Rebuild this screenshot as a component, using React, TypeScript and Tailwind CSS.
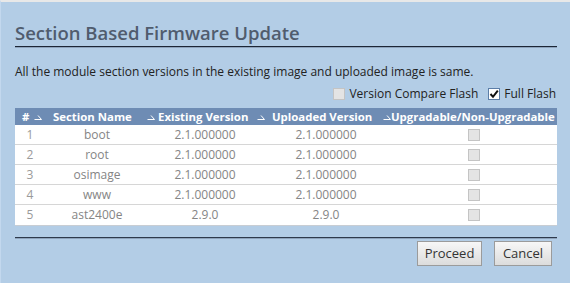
import React from 'react'

const rows = [
  { id: 1, name: 'boot', existing: '2.1.000000', uploaded: '2.1.000000' },
  { id: 2, name: 'root', existing: '2.1.000000', uploaded: '2.1.000000' },
  { id: 3, name: 'osimage', existing: '2.1.000000', uploaded: '2.1.000000' },
  { id: 4, name: 'www', existing: '2.1.000000', uploaded: '2.1.000000' },
  { id: 5, name: 'ast2400e', existing: '2.9.0', uploaded: '2.9.0' },
]

function SortIcon() {
  return (
    <svg width="8" height="6" viewBox="0 0 8 6" className="shrink-0">
      <path d="M0.5 5.5 H7.5 L4 1.5" fill="none" stroke="#ffffff" strokeWidth="1" />
    </svg>
  )
}

function Box({ checked, disabled }: { checked?: boolean; disabled?: boolean }) {
  return (
    <span
      className={`inline-flex items-center justify-center w-[12px] h-[12px] border ${
        disabled ? 'border-[#c4c4c4] bg-[#e4e4e4]' : 'border-[#5c7ea8] bg-white'
      }`}
    >
      {checked && (
        <svg width="10" height="10" viewBox="0 0 10 10">
          <path d="M1.5 5 L4 7.8 L8.8 1.6" fill="none" stroke="#111" strokeWidth="2" />
        </svg>
      )}
    </span>
  )
}

export default function App() {
  return (
    <div
      className="w-[570px] h-[283px] bg-[#b3cde6] border-t-2 border-t-[#e8e8e8] border-l border-l-[#c3d8ee] pl-[14px] pr-[13px] overflow-hidden"
      style={{ fontFamily: '"Open Sans", sans-serif' }}
    >
      <div className="pt-[19px] pb-px border-b border-b-[#1c2636] shadow-[0_1px_0_#8ea3bc]">
        <h1 className="text-[18.5px] leading-[24px] font-semibold text-[#505c6e]">
          Section Based Firmware Update
        </h1>
      </div>

      <p className="mt-[17px] text-[12px] leading-[16px] text-[#222]">
        All the module section versions in the existing image and uploaded image is same.
      </p>

      <div className="mt-[6px] flex items-center justify-end gap-[4px] text-[12px] leading-[16px] text-[#222] pr-px">
        <Box disabled />
        <span className="mr-[6px]">Version Compare Flash</span>
        <Box checked />
        <span>Full Flash</span>
      </div>

      <div className="mt-[6px] bg-white shadow-[0_1px_0_#c8cdd3]">
        <div className="flex h-[17px] items-center bg-[#6e8cb4] text-white text-[11.4px] font-bold leading-[17px] whitespace-nowrap">
          <div className="w-[17px] shrink-0 pl-[7px]">#</div>
          <div className="w-[114px] shrink-0 flex items-center pl-[2px]">
            <SortIcon />
            <span className="ml-[11px]">Section Name</span>
          </div>
          <div className="w-[110px] shrink-0 flex items-center pl-[1px]">
            <SortIcon />
            <span className="ml-[3px]">Existing Version</span>
          </div>
          <div className="w-[125px] shrink-0 flex items-center pl-[1px]">
            <SortIcon />
            <span className="ml-[7px]">Uploaded Version</span>
          </div>
          <div className="flex-1 min-w-0 flex items-center pl-[2px]">
            <SortIcon />
            <span>Upgradable/Non-Upgradable</span>
          </div>
        </div>
        {rows.map((r, i) => (
          <div
            key={r.id}
            className={`grid grid-cols-[30px_104px_112px_130px_1fr] h-[20px] items-center text-[12px] leading-[16px] text-[#858585] ${
              i < rows.length - 1 ? 'border-b border-b-[#d6d6d6]' : ''
            }`}
          >
            <div className="text-center text-[#9a9a9a]">{r.id}</div>
            <div className="text-center">{r.name}</div>
            <div className="text-center">{r.existing}</div>
            <div className="text-center">{r.uploaded}</div>
            <div className="flex justify-center pr-[1px]">
              <Box disabled />
            </div>
          </div>
        ))}
      </div>

      <div className="mt-[12px] border-b border-b-[#2e3a4c] shadow-[0_1px_0_#8ea3bc]" />

      <div className="mt-[3px] flex justify-end gap-[12px] pr-[5px]">
        <button className="h-[25px] w-[65px] border border-[#9b9b9b] bg-gradient-to-b from-[#f7f7f7] to-[#dcdcdc] text-[13px] text-[#333]">
          Proceed
        </button>
        <button className="h-[25px] w-[58px] border border-[#9b9b9b] bg-gradient-to-b from-[#f7f7f7] to-[#dcdcdc] text-[13px] text-[#333]">
          Cancel
        </button>
      </div>
    </div>
  )
}
